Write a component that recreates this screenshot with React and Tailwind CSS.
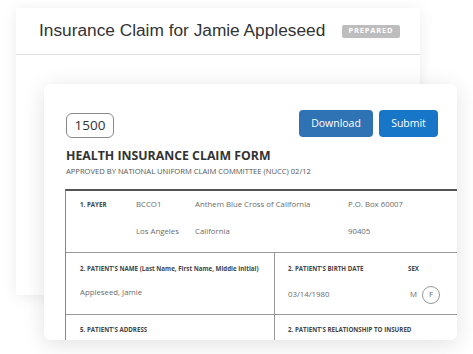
const Label = ({ children, className = "" }) => (
  <div className={`text-[6.2px] font-bold text-[#444] whitespace-nowrap ${className}`}>{children}</div>
);

const Value = ({ children, className = "" }) => (
  <div className={`text-[7.8px] text-[#6b6b6b] whitespace-nowrap ${className}`}>{children}</div>
);

export default function App() {
  return (
    <div className="relative w-[473px] h-[354px] overflow-hidden bg-white font-['Open_Sans',sans-serif]">
      {/* Claim card in the back */}
      <div className="ml-4 mt-2 w-[404px] h-[287px] bg-white shadow-[0_2px_14px_rgba(0,0,0,0.08)]">
        <div className="flex items-center h-[47px] pl-[23px] pr-5 border-b border-[#e2e2e2]">
          <h1 className="text-[17.3px] text-[#333] font-['Liberation_Sans',sans-serif] whitespace-nowrap">
            Insurance Claim for Jamie Appleseed
          </h1>
          <span className="ml-auto h-[13px] w-[58px] flex items-center justify-center rounded-[2px] bg-[#bdbdbd] text-[7.5px] font-bold tracking-[0.8px] text-white">
            PREPARED
          </span>
        </div>
      </div>

      {/* Form card on top */}
      <div className="absolute left-[44px] top-[84px] w-[413px] h-[256px] bg-white rounded-[6px] overflow-hidden shadow-[0_4px_22px_rgba(0,0,0,0.12)]">
        <div className="flex items-start pl-[22px] pr-[19px] pt-[26px]">
          <div className="mt-[3px] w-[48px] h-[25px] flex items-center justify-center rounded-[6px] border border-[#888] text-[13.5px] text-[#333]">
            1500
          </div>
          <div className="ml-auto flex gap-[6px]">
            <button className="w-[74px] h-[27px] rounded-[4px] bg-[#2f73b5] text-white text-[10.5px]">Download</button>
            <button className="w-[59px] h-[27px] rounded-[4px] bg-[#1776c7] text-white text-[10.5px]">Submit</button>
          </div>
        </div>
        <div className="pl-[22px] mt-[10px]">
          <div className="text-[12.3px] font-bold text-[#333] leading-[16px]">HEALTH INSURANCE CLAIM FORM</div>
          <div className="text-[7.6px] text-[#555] leading-[10px] mt-[2px]">
            APPROVED BY NATIONAL UNIFORM CLAIM COMMITTEE (NUCC) 02/12
          </div>
        </div>

        {/* Form table */}
        <div className="ml-[21px] mt-[13px] border-l border-t-2 border-[#888] border-t-[#555]">
          <div className="grid grid-cols-[56px_59px_153px_1fr] grid-rows-[27px_27px] pl-[14px] h-[62px] items-center border-b border-[#999]">
            <Label>1. PAYER</Label>
            <Value>BCCO1</Value>
            <Value>Anthem Blue Cross of California</Value>
            <Value>P.O. Box 60007</Value>
            <div />
            <Value>Los Angeles</Value>
            <Value>California</Value>
            <Value>90405</Value>
          </div>
          <div className="flex h-[62px] border-b border-[#999]">
            <div className="w-[209px] border-r border-[#999] pl-[14px] pt-[11px]">
              <Label>2. PATIENT'S NAME (Last Name, First Name, Middle Initial)</Label>
              <Value className="mt-[14px]">Appleseed, Jamie</Value>
            </div>
            <div className="flex-1 pl-[13px] pt-[11px]">
              <div className="flex">
                <Label className="w-[120px]">2. PATIENT'S BIRTH DATE</Label>
                <Label>SEX</Label>
              </div>
              <div className="flex items-center mt-[13px]">
                <Value className="w-[122px]">03/14/1980</Value>
                <Value>M</Value>
                <div className="ml-[5px] w-[18px] h-[18px] rounded-full border border-[#999] flex items-center justify-center text-[7.8px] text-[#666]">
                  F
                </div>
              </div>
            </div>
          </div>
          <div className="flex h-[40px]">
            <div className="w-[209px] border-r border-[#999] pl-[14px] pt-[10px]">
              <Label>5. PATIENT'S ADDRESS</Label>
            </div>
            <div className="flex-1 pl-[13px] pt-[10px]">
              <Label>2. PATIENT'S RELATIONSHIP TO INSURED</Label>
            </div>
          </div>
        </div>
      </div>
    </div>
  );
}
